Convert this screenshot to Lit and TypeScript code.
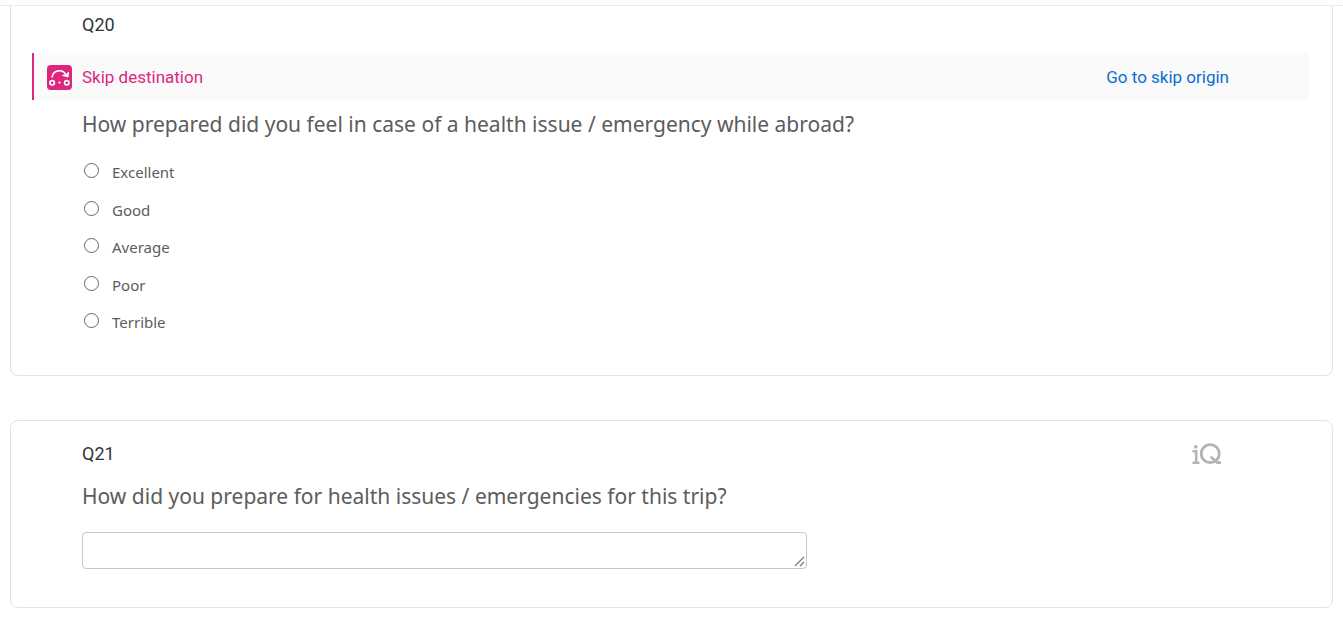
import { LitElement, html, css } from "lit";
import { customElement, state } from "lit/decorators.js";

@customElement("skip-icon")
class SkipIcon extends LitElement {
  static styles = css`
    :host { display: block; width: 25px; height: 25px; }
    svg { display: block; }
  `;
  render() {
    return html`<svg width="25" height="25" viewBox="0 0 25 25" aria-hidden="true">
      <rect width="25" height="25" rx="4" fill="#dd2680" />
      <g fill="none" stroke="#fff">
        <path d="M5 12.5C6 4.5 16 3.5 19.5 10.5" stroke-width="1.6" />
        <circle cx="5.2" cy="17.8" r="2.2" stroke-width="1.7" />
        <circle cx="19.8" cy="17.8" r="2.2" stroke-width="1.7" />
      </g>
      <path d="M21.6 7L21 12L15.4 10.4L19.2 9.7Z" fill="#fff" stroke="#fff" stroke-width=".9" />
      <circle cx="12.5" cy="17.6" r="1.1" fill="#fff" />
    </svg>`;
  }
}

@customElement("iq-logo")
class IqLogo extends LitElement {
  static styles = css`
    :host { display: block; width: 30px; height: 24px; }
    svg { display: block; }
  `;
  render() {
    return html`<svg width="30" height="24" viewBox="0 0 30 24" role="img" aria-label="iQ">
      <g fill="none" stroke="#b3b3b3" stroke-width="2.8">
        <path d="M0.5 9.3H4.2V20.7M0.5 20.7H7.5" stroke-width="2.6" />
        <circle cx="18.2" cy="11.7" r="9" />
        <path d="M18.6 14.6L25.4 20.6H29" stroke-width="2.6" />
      </g>
      <circle cx="3.8" cy="4.8" r="1.9" fill="#b3b3b3" />
    </svg>`;
  }
}

@customElement("app-root")
export class AppRoot extends LitElement {
  static styles = css`
    :host {
      display: block;
      font-family: Roboto, "Liberation Sans", sans-serif;
      color: #5c5c5c;
      background: #fff;
    }
    .topbar { height: 5px; border-bottom: 1px solid #ebebeb; }
    .list { display: flex; flex-direction: column; gap: 44px; padding: 0 10px 14px; }
    .card { border: 1px solid #e2e2e2; border-radius: 8px; padding: 20px 23px 38px 21px; }
    .card.cut { border-top: 0; border-radius: 0 0 8px 8px; padding-top: 6px; padding-bottom: 34px; }
    .inset { padding: 0 80px 0 50px; }
    .head { display: flex; align-items: center; justify-content: space-between; height: 26px; padding-right: 7px; }
    .tag { color: #32363a; font-size: 18px; line-height: 26px; }
    .skip {
      display: flex;
      align-items: flex-end;
      margin-top: 15px;
      padding: 12px 80px 10px 13px;
      border-left: 2px solid #dd2680;
      background: #fafafa;
      font-size: 17px;
      line-height: 26px;
      height: 25px;
      color: #dd2680;
    }
    .skip span { margin-left: 10px; }
    .origin { margin-left: auto; color: #0b6ed0; text-decoration: none; }
    h2 { margin: 13px 0 0; padding-bottom: 2px; font-family: "Noto Sans", sans-serif; font-size: 21px; line-height: 32px; font-weight: 400; }
    .skip + .inset h2 { margin-top: 8px; }
    .options { border: 0; margin: 11px 0 0; padding: 0; }
    .option {
      display: flex;
      align-items: flex-start;
      padding: 8px 0 7px;
      font-family: "Noto Sans", sans-serif;
      font-size: 15px;
      line-height: 1.5;
    }
    .option input {
      appearance: none;
      flex: none;
      width: 15px;
      height: 15px;
      margin: 2px 13px 0 2px;
      border: 1px solid #666;
      border-radius: 50%;
      background: #fff;
    }
    .option input:checked { border-width: 4px; border-color: #0b6ed0; }
    .answer {
      display: block;
      box-sizing: border-box;
      width: 725px;
      max-width: 100%;
      height: 37px;
      margin-top: 18px;
      border: 1px solid #c6c6c6;
      border-radius: 4px;
      background: #fff;
      font: inherit;
      resize: both;
    }
    .answer::-webkit-resizer {
      background: url("data:image/svg+xml,%3Csvg xmlns='http://www.w3.org/2000/svg' width='15' height='15'%3E%3Cpath d='M4 13L13 4M9 13L13 9' stroke='%23777' stroke-width='1.2'/%3E%3C/svg%3E") right bottom no-repeat;
    }
  `;

  @state() private choice = "";

  private options = ["Excellent", "Good", "Average", "Poor", "Terrible"];

  render() {
    return html`
      <div class="topbar"></div>
      <main class="list">
        <section class="card cut">
          <div class="inset"><div class="head"><span class="tag">Q20</span></div></div>
          <div class="skip">
            <skip-icon></skip-icon>
            <span>Skip destination</span>
            <a class="origin" href="#origin">Go to skip origin</a>
          </div>
          <div class="inset">
            <h2 id="q20">How prepared did you feel in case of a health issue / emergency while abroad?</h2>
            <fieldset class="options" aria-labelledby="q20">
              ${this.options.map(
                (o) => html`<label class="option">
                  <input type="radio" name="q20" .value=${o} .checked=${this.choice === o}
                    @change=${() => (this.choice = o)} />${o}</label>`
              )}
            </fieldset>
          </div>
        </section>
        <section class="card">
          <div class="inset">
            <div class="head"><span class="tag">Q21</span><iq-logo></iq-logo></div>
            <h2><label for="a21">How did you prepare for health issues / emergencies for this trip?</label></h2>
            <textarea class="answer" id="a21"></textarea>
          </div>
        </section>
      </main>
    `;
  }
}
